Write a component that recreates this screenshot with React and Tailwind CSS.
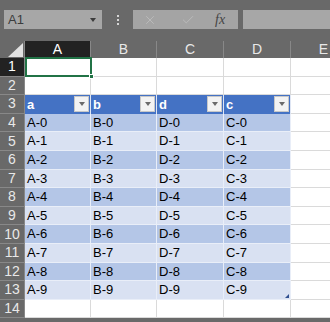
import { X, Check } from 'lucide-react'

const cols = [
  { key: 'A', w: 'w-[66px]' },
  { key: 'B', w: 'w-[66px]' },
  { key: 'C', w: 'w-[67px]' },
  { key: 'D', w: 'w-[67px]' },
]

const headers = ['a', 'b', 'd', 'c']
const prefixes = ['A', 'B', 'D', 'C']

function DropButton() {
  return (
    <span className="absolute right-[1px] top-[1px] w-[15px] h-[16px] bg-[#f3f3f3] border border-[#c8c8c8] flex items-center justify-center">
      <span className="w-0 h-0 border-l-[3.5px] border-r-[3.5px] border-t-[4px] border-l-transparent border-r-transparent border-t-[#6b6b6b]" />
    </span>
  )
}

function RowHeader({ n, active }) {
  return (
    <div
      className={`w-[25px] shrink-0 flex items-center justify-center text-[14px] border-b border-r border-[#888] ${
        active ? 'bg-[#222] text-white' : 'bg-[#696969] text-[#e8e8e8]'
      }`}
    >
      {n}
    </div>
  )
}

function App() {
  const rows = []
  for (let r = 1; r <= 14; r++) rows.push(r)

  return (
    <div className="w-[330px] h-[322px] overflow-hidden bg-[#696969] font-['Liberation_Sans',Arial,sans-serif] select-none">
      {/* formula bar */}
      <div className="h-[41px] flex items-start pt-[10px] pl-[4px]">
        <div className="w-[98px] h-[19px] bg-[#a7a7a7] flex items-center justify-between pl-[4px] pr-[6px]">
          <span className="text-[13px] text-[#3c3c3c]">A1</span>
          <span className="w-0 h-0 border-l-[3.5px] border-r-[3.5px] border-t-[4px] border-l-transparent border-r-transparent border-t-[#3c3c3c]" />
        </div>
        <div className="w-[31px] h-[19px] flex flex-col items-center justify-center gap-[2px]">
          <span className="w-[2px] h-[2px] bg-[#d6d6d6]" />
          <span className="w-[2px] h-[2px] bg-[#d6d6d6]" />
          <span className="w-[2px] h-[2px] bg-[#d6d6d6]" />
        </div>
        <div className="w-[105px] h-[19px] bg-[#a4a4a4] flex items-center">
          <X size={14} strokeWidth={1.5} className="text-[#bdbdbd] ml-[10px]" />
          <Check size={14} strokeWidth={1.5} className="text-[#bdbdbd] ml-[24px]" />
          <span className="ml-[20px] text-[14px] italic text-[#454545] font-['Liberation_Serif',serif]">fx</span>
        </div>
        <div className="ml-[5px] flex-1 h-[19px] bg-[#a7a7a7]" />
      </div>

      {/* column headers */}
      <div className="flex h-[17px]">
        <div className="w-[25px] shrink-0 relative border-r border-[#888]">
          <svg className="absolute right-[1px] bottom-[1px]" width="15" height="14" viewBox="0 0 15 14">
            <polygon points="15,0 15,14 0,14" fill="#e2e2e2" />
          </svg>
        </div>
        {cols.map((c) => (
          <div
            key={c.key}
            className={`${c.w} shrink-0 flex items-center justify-center text-[14px] border-r border-[#888] ${
              c.key === 'A' ? 'bg-[#222] text-white' : 'text-[#e8e8e8]'
            }`}
          >
            {c.key}
          </div>
        ))}
        <div className="flex-1 flex items-center justify-end pr-[2px] text-[14px] text-[#e8e8e8]">E</div>
      </div>

      {/* grid */}
      <div className="relative">
        {rows.map((r) => {
          const inTable = r >= 3 && r <= 13
          const dark = r >= 4 && r % 2 === 0
          return (
            <div key={r} className="flex h-[18.6px]">
              <RowHeader n={r} active={r === 1} />
              {cols.map((c, i) => {
                let cls = 'bg-white border-r border-b border-[#dadada] text-black'
                let content = null
                if (r === 3) {
                  cls = 'bg-[#4472c4] border-r border-[#dfe6f4] text-white font-bold'
                  content = (
                    <>
                      <span className="pl-[2px]">{headers[i]}</span>
                      <DropButton />
                    </>
                  )
                } else if (inTable) {
                  cls = `${dark ? 'bg-[#b4c6e7]' : 'bg-[#d9e1f2]'} border-r border-b border-[#e9eef8] text-black`
                  content = <span className="pl-[2px]">{prefixes[i]}-{r - 4}</span>
                }
                return (
                  <div
                    key={c.key}
                    className={`${c.w} shrink-0 relative flex items-center text-[13px] ${cls}`}
                  >
                    {content}
                    {r === 13 && c.key === 'D' && (
                      <svg className="absolute right-[1px] bottom-[1px]" width="4" height="4" viewBox="0 0 4 4">
                        <polygon points="4,0 4,4 0,4" fill="#2f4f8f" />
                      </svg>
                    )}
                  </div>
                )
              })}
              <div className="flex-1 bg-white border-b border-[#dadada]" />
            </div>
          )
        })}
        {/* active cell A1 */}
        <div className="absolute left-[25px] top-[-1px] w-[67px] h-[20px] border-2 border-[#217346]">
          <span className="absolute -right-[4px] -bottom-[4px] w-[5px] h-[5px] bg-[#217346] border border-white" />
        </div>
      </div>
    </div>
  )
}

export default App
